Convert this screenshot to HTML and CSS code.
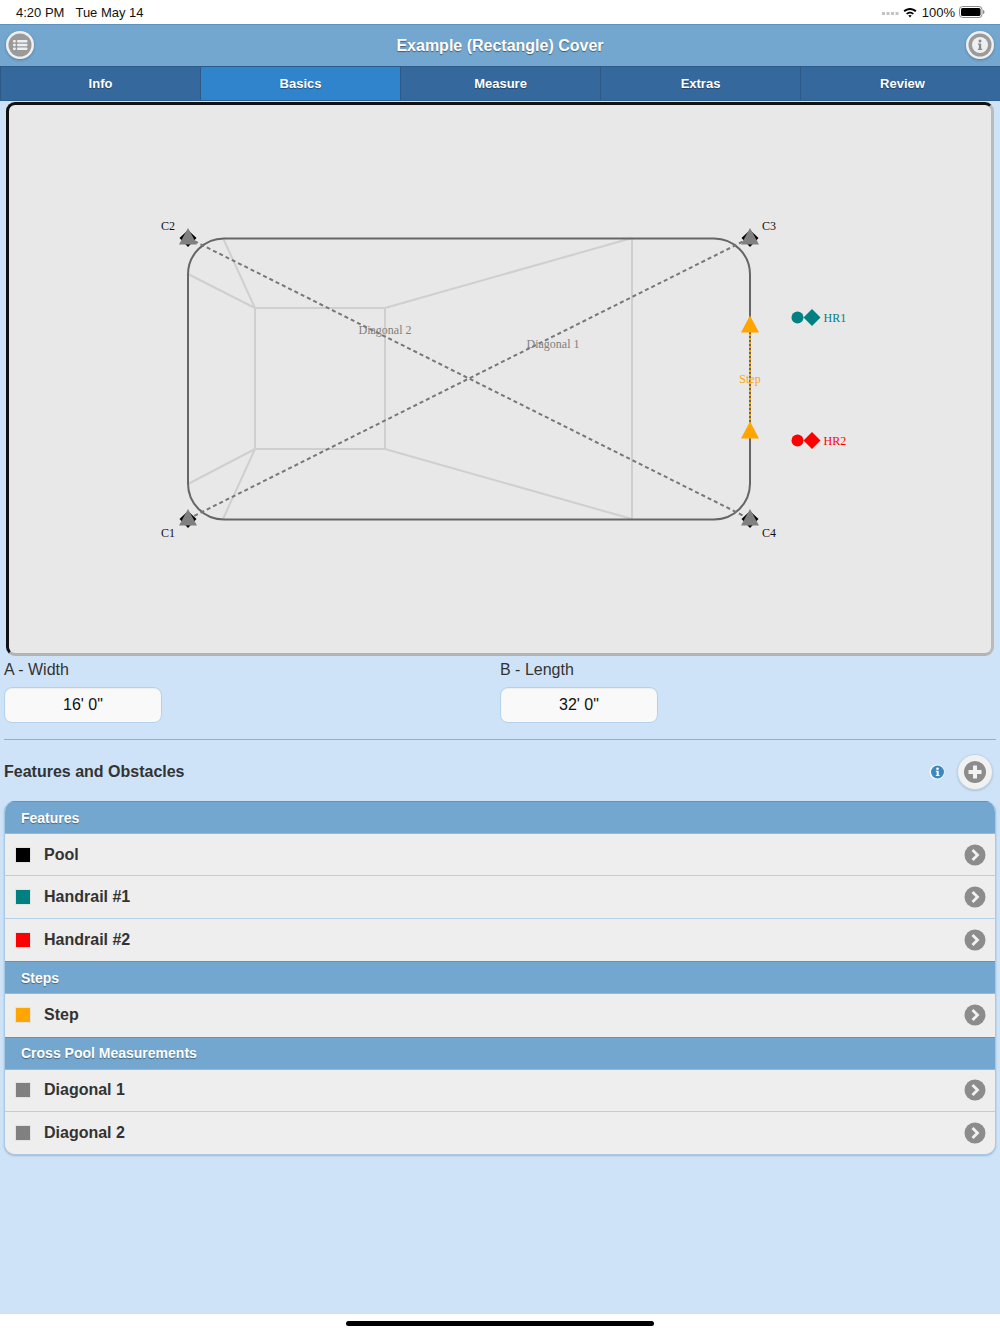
FILE: index.html
```html
<!DOCTYPE html>
<html lang="en">
<head>
<meta charset="utf-8">
<title>Example (Rectangle) Cover</title>
<link rel="stylesheet" href="styles.css">
</head>
<body>
<div class="app">
  <div class="status">
    <span class="status-time">4:20 PM</span><span class="status-date">Tue May 14</span>
    <span class="status-right">
      <svg class="signal" width="18" height="4" viewBox="0 0 18 4"><g fill="#c4c4c4"><rect x="0" y="1" width="3" height="3"/><rect x="4.5" y="1" width="3" height="3"/><rect x="9" y="1" width="3" height="3"/><rect x="13.5" y="1" width="3" height="3"/></g></svg>
      <svg class="wifi" width="14" height="11" viewBox="0 0 14 11"><path d="M0.5 3.6C4.2 0.1 9.8 0.1 13.5 3.6L12.2 5C9.2 2.3 4.8 2.3 1.8 5Z M3 6.2C5.3 4.1 8.7 4.1 11 6.2L9.7 7.6C8.1 6.2 5.9 6.2 4.3 7.6Z M5.3 8.6C6.3 7.8 7.7 7.8 8.7 8.6L7 10.6Z" fill="#000"/></svg>
      <span class="status-pct">100%</span>
      <svg class="battery" width="26" height="12" viewBox="0 0 26 12"><rect x="0.5" y="0.5" width="22.5" height="11" rx="3" fill="none" stroke="#8a8a8a"/><rect x="2" y="2" width="19.5" height="8" rx="1.6" fill="#000"/><path d="M24 4v4c1-.3 1.5-1 1.5-2s-.5-1.700-1.500-2z" fill="#8a8a8a"/></svg>
    </span>
  </div>

  <header class="titlebar">
    <button class="round-btn" type="button" aria-label="Menu">
      <svg width="28" height="28" viewBox="0 0 28 28"><circle cx="14" cy="14" r="14" fill="#efefef"/><circle cx="14" cy="14" r="11.500" fill="#9a9a9a"/><g fill="#efefef"><rect x="7" y="9" width="2.800" height="2.400" rx="1"/><rect x="7" y="12.800" width="2.800" height="2.400" rx="1"/><rect x="7" y="16.600" width="2.800" height="2.400" rx="1"/><rect x="11" y="9" width="10.500" height="2.400" rx="1"/><rect x="11" y="12.800" width="10.500" height="2.400" rx="1"/><rect x="11" y="16.600" width="10.500" height="2.400" rx="1"/></g></svg>
    </button>
    <h1 class="title">Example (Rectangle) Cover</h1>
    <button class="round-btn" type="button" aria-label="Info">
      <svg width="28" height="28" viewBox="0 0 28 28"><circle cx="14" cy="14" r="14" fill="#efefef"/><circle cx="14" cy="14" r="11.500" fill="#9a9a9a"/><circle cx="14" cy="14" r="8" fill="#efefef"/><circle cx="14" cy="10" r="1.500" fill="#8a8a8a"/><path d="M12 12.500h3.200v5.200h1v1.300h-4.300v-1.300h1v-3.900h-.900z" fill="#8a8a8a"/></svg>
    </button>
  </header>

  <nav class="tabs">
    <a class="tab">Info</a>
    <a class="tab tab-active">Basics</a>
    <a class="tab">Measure</a>
    <a class="tab">Extras</a>
    <a class="tab tab-last">Review</a>
  </nav>

  <main class="content">
    <div class="canvas">
      <svg class="drawing" width="987" height="553" viewBox="6 102 987 553">
        <g class="seams">
          <path d="M223 238L255 308M188 274L255 308M255 308H385M385 308L632 238M255 308V449M385 308V449M255 449H385M188 484L255 449M223 519L255 449M385 449L632 519M632 238V519"/>
        </g>
        <rect class="pool" x="188" y="238.500" width="562" height="281" rx="36" ry="36"/>
        <g class="diagonals">
          <path d="M188 519L750 238"/>
          <path d="M188 238L750 519"/>
        </g>
        <text class="lbl lbl-grey" x="385" y="334" text-anchor="middle">Diagonal 2</text>
        <text class="lbl lbl-grey" x="553" y="348" text-anchor="middle">Diagonal 1</text>
        <path class="step-base" d="M750 330V432"/>
        <path class="step-dash" d="M750 330V432"/>
        <text class="lbl lbl-orange" x="750" y="383" text-anchor="middle">Step</text>
        <path class="step-tri" d="M750 315.500L759 332.500H741Z"/>
        <path class="step-tri" d="M750 421.500L759 438.500H741Z"/>

        <g id="c2"><path d="M188 230L196.500 238L188 247L179.500 238Z" fill="#000"/><path d="M188 228L197 244.500H179Z" fill="#808080"/></g>
        <g><path d="M750 230L758.500 238L750 247L741.500 238Z" fill="#000"/><path d="M750 228L759 244.500H741Z" fill="#808080"/></g>
        <g><path d="M188 511L196.500 519L188 528L179.500 519Z" fill="#000"/><path d="M188 509L197 525.500H179Z" fill="#808080"/></g>
        <g><path d="M750 511L758.500 519L750 528L741.500 519Z" fill="#000"/><path d="M750 509L759 525.500H741Z" fill="#808080"/></g>
        <text class="lbl" x="161" y="230">C2</text>
        <text class="lbl" x="762" y="230">C3</text>
        <text class="lbl" x="161" y="537">C1</text>
        <text class="lbl" x="762" y="537">C4</text>

        <g fill="#008080"><circle cx="797.500" cy="317.500" r="6"/><path d="M812 309L820.500 317.500L812 326L803.500 317.500Z"/></g>
        <text class="lbl" x="823.500" y="322" fill="#008080" style="fill:#008080">HR1</text>
        <g fill="#ff0000"><circle cx="797.500" cy="440.500" r="6"/><path d="M812 432L820.500 440.500L812 449L803.500 440.500Z"/></g>
        <text class="lbl lbl-red" x="823.500" y="445">HR2</text>
      </svg>
    </div>

    <div class="fields">
      <div class="field">
        <label class="field-label">A - Width</label>
        <div class="field-input">16' 0"</div>
      </div>
      <div class="field">
        <label class="field-label">B - Length</label>
        <div class="field-input">32' 0"</div>
      </div>
    </div>

    <hr class="divider">

    <div class="section-head">
      <h2 class="section-title">Features and Obstacles</h2>
      <svg class="info-small" width="16" height="16" viewBox="0 0 16 16"><circle cx="8" cy="8" r="7.500" fill="#fff" opacity=".8"/><circle cx="8.500" cy="8" r="6.500" fill="#3f88bd"/><circle cx="8.500" cy="4.800" r="1.300" fill="#fff"/><path d="M6.800 6.700h2.900v4.300h.9v1.100H6.800V11h.9V7.800h-.9z" fill="#fff"/></svg>
      <button class="add-btn" type="button" aria-label="Add">
        <svg width="22" height="22" viewBox="0 0 22 22"><circle cx="11" cy="11" r="11" fill="#8c8c8c"/><path d="M9 4.500h4V9h4.500v4H13v4.500H9V13H4.500V9H9z" fill="#f2f2f2"/></svg>
      </button>
    </div>

    <div class="list">
      <div class="list-head">Features</div>
      <div class="list-row"><span class="swatch swatch-black"></span><span class="row-text">Pool</span><svg class="chev" width="22" height="22" viewBox="0 0 22 22"><circle cx="11" cy="11" r="10.500" fill="#8c8c8c"/><path d="M8.500 6L13.500 11L8.500 16" fill="none" stroke="#f2f2f2" stroke-width="2.800"/></svg></div>
      <div class="list-row"><span class="swatch swatch-teal"></span><span class="row-text">Handrail #1</span><svg class="chev" width="22" height="22" viewBox="0 0 22 22"><circle cx="11" cy="11" r="10.500" fill="#8c8c8c"/><path d="M8.500 6L13.500 11L8.500 16" fill="none" stroke="#f2f2f2" stroke-width="2.800"/></svg></div>
      <div class="list-row row-end"><span class="swatch swatch-red"></span><span class="row-text">Handrail #2</span><svg class="chev" width="22" height="22" viewBox="0 0 22 22"><circle cx="11" cy="11" r="10.500" fill="#8c8c8c"/><path d="M8.500 6L13.500 11L8.500 16" fill="none" stroke="#f2f2f2" stroke-width="2.800"/></svg></div>
      <div class="list-head">Steps</div>
      <div class="list-row row-end"><span class="swatch swatch-orange"></span><span class="row-text">Step</span><svg class="chev" width="22" height="22" viewBox="0 0 22 22"><circle cx="11" cy="11" r="10.500" fill="#8c8c8c"/><path d="M8.500 6L13.500 11L8.500 16" fill="none" stroke="#f2f2f2" stroke-width="2.800"/></svg></div>
      <div class="list-head">Cross Pool Measurements</div>
      <div class="list-row"><span class="swatch swatch-grey"></span><span class="row-text">Diagonal 1</span><svg class="chev" width="22" height="22" viewBox="0 0 22 22"><circle cx="11" cy="11" r="10.500" fill="#8c8c8c"/><path d="M8.500 6L13.500 11L8.500 16" fill="none" stroke="#f2f2f2" stroke-width="2.800"/></svg></div>
      <div class="list-row row-end"><span class="swatch swatch-grey"></span><span class="row-text">Diagonal 2</span><svg class="chev" width="22" height="22" viewBox="0 0 22 22"><circle cx="11" cy="11" r="10.500" fill="#8c8c8c"/><path d="M8.500 6L13.500 11L8.500 16" fill="none" stroke="#f2f2f2" stroke-width="2.800"/></svg></div>
    </div>
  </main>

  <div class="home-area"><span class="home-bar"></span></div>
</div>
</body>
</html>
```
FILE: styles.css
```css
* { box-sizing: border-box; }
html, body { margin: 0; padding: 0; }
body { background: #cee3f8; font-family: "Liberation Sans", Arial, sans-serif; color: #333; }
.app { width: 1000px; height: 1334px; display: flex; flex-direction: column; overflow: hidden; }

.status { height: 24px; flex: none; background: #fff; display: flex; align-items: center; padding: 0 15px 0 16px; font-size: 13px; color: #111; }
.status-date { margin-left: 11px; }
.status-right { margin-left: auto; display: flex; align-items: center; }
.signal { margin-right: 3px; margin-top: 2px; }
.wifi { margin-right: 5px; }
.status-pct { margin-right: 4px; }

.titlebar { height: 42px; flex: none; background: #74a7cf; border-top: 1px solid #5f94be; display: flex; align-items: center; justify-content: space-between; padding: 0 6px; }
.round-btn { width: 28px; height: 28px; padding: 0; border: 0; background: none; display: block; border-radius: 50%; box-shadow: 0 1px 3px rgba(0,0,0,.25); margin-top: -2px; }
.round-btn svg { display: block; }
.title { margin: 0; font-size: 16px; line-height: 20px; font-weight: bold; color: #fff; text-shadow: 0 1px 1px rgba(0,0,0,.45); }

.tabs { height: 35px; flex: none; display: grid; grid-template-columns: repeat(5, 200px); background: #35689c; border-top: 1px solid #2d5a88; }
.tab { display: flex; align-items: center; justify-content: center; font-size: 13px; font-weight: bold; color: #fff; text-shadow: 0 1px 1px rgba(0,0,0,.4); border-left: 1px solid #2d5a88; background: #35689c; border-bottom: 1px solid #2f5f90; }
.tab-active { background: #3084cb; }
.tab-last { padding-left: 4px; }

.content { flex: 1; padding: 1px 4px 0; }
.canvas { width: 988px; height: 554px; margin-left: 2px; background: #e8e8e8; border-style: solid; border-width: 3px 3px 3px 3px; border-color: #111 #bbb #b4b4b4 #111; border-radius: 9px; overflow: hidden; position: relative; }
.drawing { display: block; position: absolute; left: -3px; top: -3px; }
.seams path { fill: none; stroke: #cfcfcf; stroke-width: 2; }
.pool { fill: none; stroke: #666; stroke-width: 2; }
.diagonals path { fill: none; stroke: #777; stroke-width: 2; stroke-dasharray: 4 3; }
.step-base { stroke: #666; stroke-width: 2; fill: none; }
.step-dash { stroke: #ffa500; stroke-width: 2; stroke-dasharray: 2 2; fill: none; }
.step-tri { fill: #ffa500; }
.lbl { font-family: "Liberation Serif", "Times New Roman", serif; font-size: 12px; fill: #111; }
.lbl-grey { fill: #808080; }
.lbl-orange { fill: #ffa500; }
.lbl-red { fill: #ff0000; }

.fields { display: grid; grid-template-columns: 496px 496px; margin-top: 5px; }
.field-label { display: block; font-size: 16px; line-height: 18px; color: #333; }
.field-input { width: 158px; height: 36px; margin-top: 8px; margin-left: 0; background: #f9f9f9; border: 1px solid #b5d2ec; border-radius: 8px; display: flex; align-items: center; justify-content: center; font-size: 16px; color: #111; box-shadow: 0 1px 1px rgba(0,0,0,.05) inset; }

.divider { height: 1px; border: 0; background: #aaa; margin: 16px 0 0; }

.section-head { height: 61px; display: flex; align-items: center; }
.section-title { margin: 0; font-size: 16px; line-height: 20px; font-weight: bold; color: #333; flex: 1; position: relative; top: 1px; }
.info-small { margin-right: 12px; margin-top: 2px; }
.add-btn { width: 36px; height: 36px; margin-right: 3px; margin-top: 3px; padding: 0; border: 1px solid #bcd4ea; border-radius: 50%; background: #f1f1f1; display: flex; align-items: center; justify-content: center; box-shadow: 0 1px 2px rgba(0,0,0,.15); }

.list { border: 1px solid #a9c8e4; border-top: 0; border-radius: 11px; overflow: hidden; background: #eee; box-shadow: 0 1px 2px rgba(70,110,150,.35); }
.list-head { height: 33px; background: #74a7cf; border-top: 1px solid #5f94be; border-bottom: 1px solid #8fbadb; padding-left: 16px; display: flex; align-items: center; font-size: 14px; font-weight: bold; color: #fff; text-shadow: 0 1px 1px rgba(0,0,0,.4); }
.list-row { height: 42.400px; background: #eee; border-bottom: 1px solid #b5d0e8; display: flex; align-items: center; padding: 0 9px 0 10px; }
.row-end { border-bottom: 0; }
.swatch { width: 16px; height: 16px; flex: none; border: 1px solid #e2e2e2; }
.swatch-black { background: #000; }
.swatch-teal { background: #008080; }
.swatch-red { background: #ff0000; }
.swatch-orange { background: #ffa500; }
.swatch-grey { background: #808080; }
.row-text { margin-left: 13px; font-size: 16px; font-weight: bold; color: #333; flex: 1; }
.chev { flex: none; }

.home-area { height: 20px; flex: none; background: #fff; display: flex; justify-content: center; padding-top: 7px; }
.home-bar { width: 308px; height: 5px; border-radius: 3px; background: #000; display: block; }
```
